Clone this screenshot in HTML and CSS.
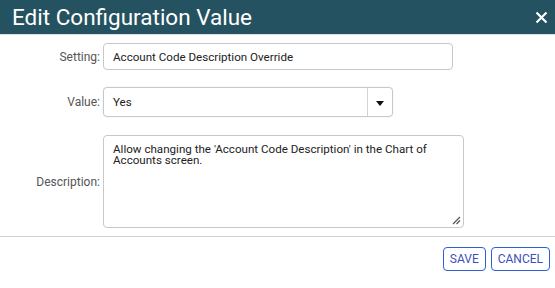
FILE: index.html
```html
<!DOCTYPE html>
<html>
<head>
<meta charset="utf-8">
<link rel="stylesheet" href="styles.css">
</head>
<body>
<div class="dialog">
  <div class="header">
    <span class="title">Edit Configuration Value</span>
    <svg class="close" width="13" height="13" viewBox="0 0 13 13"><path d="M1.5 1.5 L11.5 11.5 M11.5 1.5 L1.5 11.5" stroke="#fff" stroke-width="2.2" fill="none"/></svg>
  </div>
  <div class="body">
    <div class="row row-setting">
      <label class="label">Setting:</label>
      <div class="input setting">Account Code Description Override</div>
    </div>
    <div class="row row-value">
      <label class="label">Value:</label>
      <div class="select">
        <span class="select-text">Yes</span>
        <span class="select-btn"><svg width="8" height="5" viewBox="0 0 8 5"><path d="M0 0 H8 L4 5 Z" fill="#111"/></svg></span>
      </div>
    </div>
    <div class="row row-desc">
      <label class="label">Description:</label>
      <div class="textarea">Allow changing the 'Account Code Description' in the Chart of Accounts screen.
        <svg class="grip" width="9" height="9" viewBox="0 0 9 9"><path d="M8 1 L1 8 M8 4.5 L4.5 8" stroke="#555" stroke-width="1.2"/></svg>
      </div>
    </div>
  </div>
  <div class="footer">
    <button class="btn">SAVE</button>
    <button class="btn">CANCEL</button>
  </div>
</div>
</body>
</html>
```
FILE: styles.css
```css
* { box-sizing: border-box; }
html, body { margin: 0; padding: 0; background: #fff; }
body { font-family: Roboto, "Liberation Sans", sans-serif; width: 555px; height: 288px; overflow: hidden; }
.dialog { width: 555px; }
.header {
  height: 35px;
  background: #245260;
  border-bottom: 1px solid #d9dfe2;
  display: flex;
  align-items: center;
  justify-content: space-between;
  padding: 0 7px 0 12px;
}
.title { color: #fff; font-size: 22.5px; }
.close { display: block; margin-top: 1px; }
.body { padding: 8px 0 0 0; height: 201px; }
.row { display: flex; }
.label {
  width: 103px;
  text-align: right;
  padding-right: 3px;
  font-size: 12px;
  color: #555;
  flex: none;
}
.row-setting { height: 27px; align-items: center; }
.input {
  width: 350px;
  height: 27px;
  border: 1px solid #c8c8c8;
  border-radius: 4px;
  font-size: 11.6px;
  color: #222;
  padding: 0 9px;
  display: flex;
  align-items: center;
}
.row-value { margin-top: 17px; height: 30px; align-items: center; }
.select {
  width: 290px;
  height: 30px;
  border: 1px solid #c8c8c8;
  border-radius: 4px;
  display: flex;
  box-shadow: 0 0 1px #ccc;
}
.select-text { flex: 1; display: flex; align-items: center; padding-left: 9px; font-size: 11.6px; color: #222; }
.select-btn { width: 25px; border-left: 1px solid #d4d4d4; display: flex; align-items: center; justify-content: center; padding-top: 2px; }
.row-desc { margin-top: 18px; align-items: center; }
.textarea {
  position: relative;
  width: 361px;
  height: 93px;
  border: 1px solid #c8c8c8;
  border-radius: 4px;
  font-size: 11.6px;
  line-height: 11px;
  color: #222;
  padding: 8px 9px;
}
.grip { position: absolute; right: 2px; bottom: 2px; }
.footer {
  border-top: 1px solid #cfcfcf;
  display: flex;
  justify-content: flex-end;
  gap: 5px;
  padding: 10px 5px 0 0;
}
.btn {
  font-family: Roboto, "Liberation Sans", sans-serif;
  font-size: 12px;
  color: #3c4fc0;
  background: #fff;
  border: 1.5px solid #2d5fd6;
  border-radius: 4px;
  height: 24px;
  padding: 0 6px;
  margin: 0;
}
```
